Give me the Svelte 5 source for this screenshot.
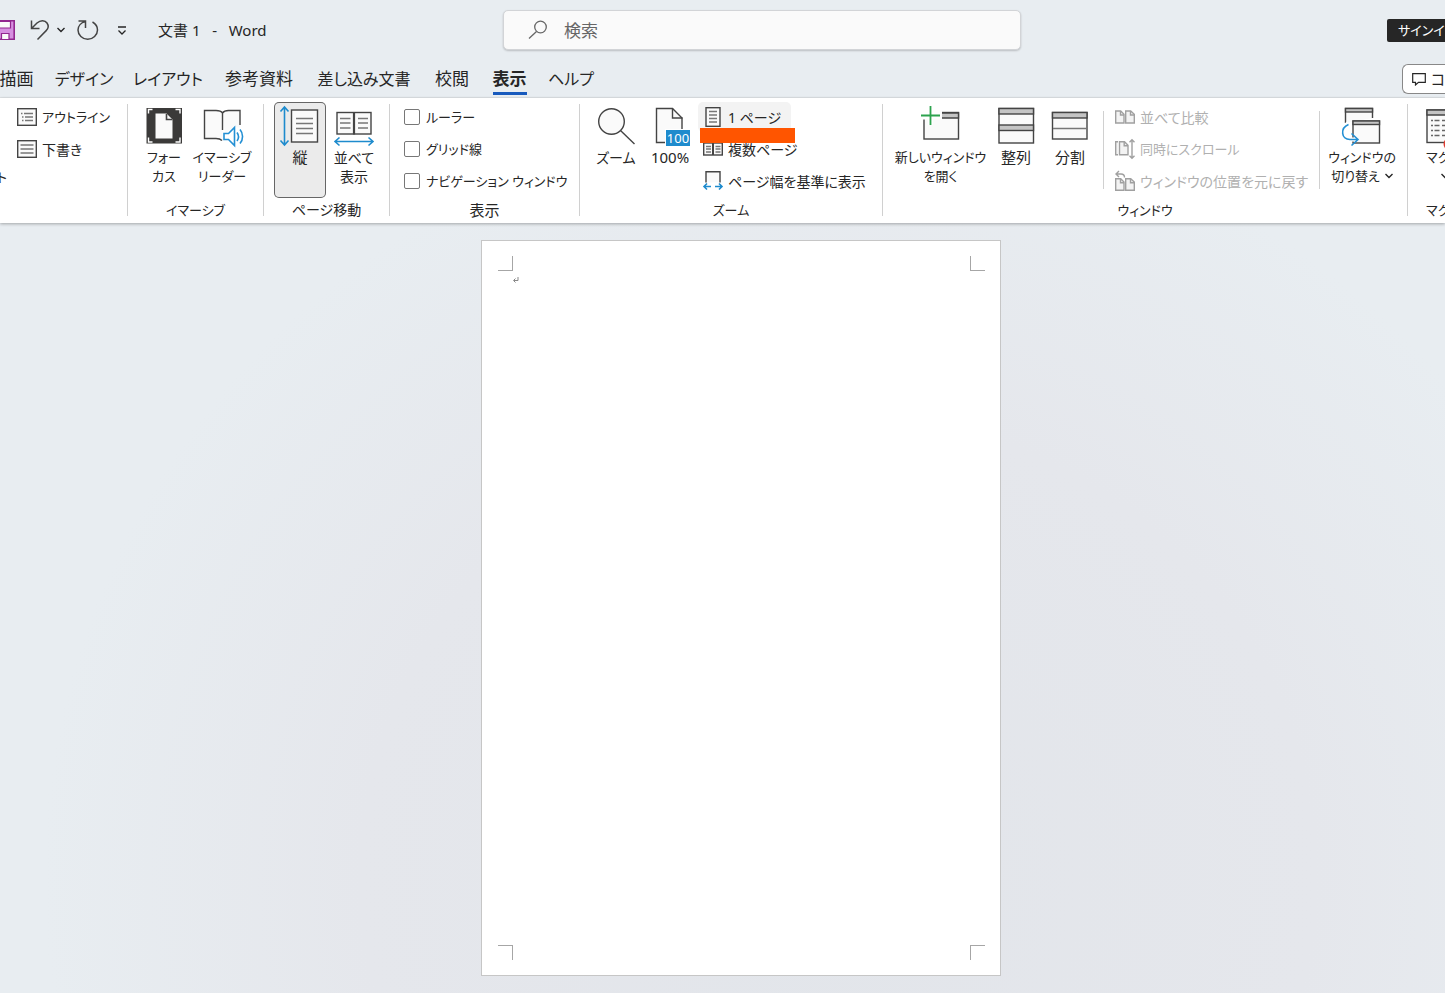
<script>
  const tabs = [
    { label: "描画" },
    { label: "デザイン", kana: true },
    { label: "レイアウト", kana: true },
    { label: "参考資料" },
    { label: "差し込み文書", kana: true },
    { label: "校閲" },
    { label: "表示" },
    { label: "ヘルプ", kana: true },
  ];
  let activeTab = $state("表示");
  let search = $state("");

  let options = $state([
    { label: "ルーラー", checked: false },
    { label: "グリッド線", checked: false },
    { label: "ナビゲーション ウィンドウ", checked: false },
  ]);
</script>

{#snippet chevron()}
  <svg class="chevron" width="8" height="6" viewBox="0 0 8 6">
    <path d="M0.5 1 L4 4.5 L7.5 1" fill="none" stroke="#262626" stroke-width="1.4" />
  </svg>
{/snippet}

{#snippet big(name, lines, arrow = false, pressed = false)}
  <button class="big big--{name}" class:pressed>
    <svg class="big__icon" width="40" height="40" viewBox="0 0 40 40" fill="none" stroke="#444" stroke-width="1.4">
      {#if name === "focus"}
        <rect x="2.500" y="2" width="35.5" height="35.5" fill="#3b3a39" stroke="none" />
        <path d="M4.5 7.5V3.5H8.500M31.500 3.5h4.5V7.5M4.5 31.5v4.5H8.5M31.5 36h4.5V31.5" stroke="#fff" />
        <path d="M11.5 7.5h11l6 6v19h-17z" fill="#fafafa" stroke="none" />
        <path d="M22.5 8v5.5h6" stroke-width="1.6" />
      {:else if name === "reader"}
        <path d="M20.5 6.5C19 4.8 17 4.5 14 4.5H2.5v28H14c3 0 5 .8 6.5 2.5V6.5c1.5-1.7 3.5-2 6-2h11.5v17L32 21l-9 7" fill="#fafafa" stroke="none" />
        <path d="M20 34.5C18.5 33 17 32.5 14 32.5H2.5v-28H14c3 0 5 .3 6.5 2.5V24M20.5 7c1.5-2.2 3.5-2.5 6-2.5H38V19" />
        <path d="M22 27.5h4.5l6-6v18l-6-6H22z" fill="#fff" stroke="#2490d4" stroke-width="1.6" />
        <path d="M35 26.5c1.8 2.5 1.8 6 0 8.5M38 23.5c3.4 4 3.4 10 0 14" stroke="#2490d4" stroke-width="1.6" />
      {:else if name === "vertical"}
        <path d="M4.5 1v38M0.5 5.5l4-4.5 4 4.5M0.5 34.5l4 4.5 4-4.5" stroke="#1e8bcd" stroke-width="1.6" />
        <rect x="11.5" y="4" width="26" height="32" fill="#fafafa" />
        <path d="M16 12.5h17M16 17.5h17M16 22.5h17M16 27.5h17" stroke="#777" />
      {:else if name === "side"}
        <rect x="3" y="6.5" width="34" height="21.5" fill="#fafafa" />
        <path d="M20 6v22.5" stroke-width="2.2" />
        <path d="M6 12.5h10.5M6 17h10.5M6 22h10.5M24 12.5h10M24 17h10M24 22h10" stroke="#777" />
        <path d="M1 35.5h38M5.5 31.5L1 35.5l4.5 4M34.5 31.5l4.5 4-4.5 4" stroke="#1e8bcd" stroke-width="1.6" />
      {:else if name === "zoom"}
        <circle cx="15.5" cy="15.5" r="12.8" fill="#fafafa" />
        <path d="M24.5 24.5L38.5 38" />
      {:else if name === "hundred"}
        <path d="M6.5 2.5h16l9.5 9.5v24.5h-25.5z" fill="#fafafa" />
        <path d="M22.5 2.5v9.5h10" />
        <rect x="15.5" y="23.5" width="25" height="17" fill="#1e8bcd" stroke="#fff" stroke-width="1" />
        <text x="28" y="37" text-anchor="middle" fill="#fff" stroke="none">100</text>
      {:else if name === "new"}
        <rect x="3" y="6.5" width="34.5" height="26.5" fill="#fafafa" />
        <path d="M3 7h34.5v5H3z" fill="#c4c4c4" />
        <path d="M-1 3h22v10.5H2v-1z" fill="#fff" stroke="none" />
        <path d="M9.5 0v19M0 9.5h19" stroke="#fff" stroke-width="5" />
        <path d="M9.5 0v19M0 9.5h19" stroke="#2da34e" stroke-width="1.8" />
      {:else if name === "arrange"}
        <rect x="3" y="2.5" width="34.5" height="34.5" fill="#fafafa" />
        <rect x="3" y="2.5" width="34.5" height="5.5" fill="#c4c4c4" />
        <rect x="3" y="19" width="34.5" height="5.5" fill="#c4c4c4" />
      {:else if name === "split"}
        <rect x="2.5" y="6.5" width="34.5" height="26.5" fill="#fafafa" />
        <rect x="2.5" y="6.5" width="34.5" height="5.5" fill="#c4c4c4" />
        <path d="M3 22.5h34" stroke="#777" />
      {:else if name === "switch"}
        <path d="M3.5 17V2.5h27V12" fill="#fafafa" />
        <rect x="3.5" y="2.5" width="27" height="3.5" fill="#c4c4c4" />
        <rect x="11" y="15" width="26.5" height="22" fill="#fafafa" />
        <rect x="11" y="15" width="26.5" height="3.5" fill="#c4c4c4" />
        <path d="M6.5 17C-2 22-1 33.5 8 33.5h8" stroke="#fff" stroke-width="4" />
        <path d="M6.5 18.5C-2 22-1 33.5 8 33.5h8M9.5 27.5l6.5 6-6.5 6" stroke="#2490d4" stroke-width="1.6" />
      {:else if name === "macro"}
        <rect x="1" y="4" width="36" height="32.5" fill="#fafafa" />
        <path d="M1 4h36v5H1z" fill="#c4c4c4" />
        <path d="M5 14.5h2M5 19.5h2M5 24.5h2M5 29.5h2M8.5 14.5h5M8.5 19.5h5M8.5 24.5h5M8.5 29.5h5M16 14.5h6M16 19.5h6M16 24.5h6M16 29.5h6" stroke="#666" />
        <circle cx="24" cy="38" r="6.5" fill="#e03c31" stroke="none" />
      {/if}
    </svg>
    {#each lines as line, i}
      <span>{line}{#if arrow && i === lines.length - 1}{@render chevron()}{/if}</span>
    {/each}
  </button>
{/snippet}

{#snippet small(name, label, disabled = false)}
  <button class="small small--{name}" {disabled}>
    <svg width="20" height="20" viewBox="0 0 20 20" fill="none" stroke={disabled ? "#a0a0a0" : "#444"} stroke-width="1.4">
      {#if name === "outline"}
        <rect x="0.7" y="1.7" width="18.6" height="16.6" fill="#fafafa" />
        <path d="M4 6.5h1.5M7 6.5h9M5 10h1.5M8 10h8M5 13.5h1.5M8 13.5h8" stroke="#777" />
      {:else if name === "draft"}
        <rect x="0.7" y="1.7" width="18.6" height="16.6" fill="#fafafa" />
        <path d="M3.5 6h13M3.5 10h13M3.5 14h13" stroke="#777" />
      {:else if name === "one"}
        <rect x="3" y="0.7" width="14" height="18.6" fill="#fafafa" />
        <path d="M6 4.5h8M6 8h8M6 11.5h8M6 15h8" stroke="#777" />
      {:else if name === "multi"}
        <rect x="0.7" y="4" width="18.6" height="12" fill="#fafafa" />
        <path d="M10 4v12" stroke-width="2" />
        <path d="M3 7.5h5M3 10h5M3 13h5M12.5 7.5h5M12.5 10h5M12.5 13h5" stroke="#777" />
      {:else if name === "width"}
        <path d="M3 11.5V0.7h14v10.8" fill="#fafafa" />
        <path d="M1 15.5h7M12 15.5h7M4 12.5l-3 3 3 3M16 12.5l3 3-3 3" stroke="#1e8bcd" stroke-width="1.6" />
      {:else if name === "compare"}
        <path d="M0.7 4h5l3.3 3.3V16H0.7zM10.7 4h5l3.6 3.3V16h-8.6z" fill="#f3f3f3" />
        <path d="M5.5 4v4H9M15.5 4v4h4" />
      {:else if name === "sync"}
        <path d="M3 2.7H0.7v13H3M4.5 2.7h5L13 6.2v9.5H4.5z" fill="#f3f3f3" />
        <path d="M9.2 2.7v4H13M17 0.7v18.6M14.5 3.2L17 0.7l2.5 2.5M14.5 16.8l2.5 2.5 2.5-2.5" />
      {:else if name === "reset"}
        <path d="M0.7 7.7h5l3.3 3.3v8.3H0.7zM10.7 7.7h5l3.6 3.3v8.3h-8.6z" fill="#f3f3f3" />
        <path d="M5.5 7.7v4H9M15.5 7.7v4h4M1 3h5c2.5 0 3.5 1 3.5 3.5M4 0L1 3l3 3" />
      {/if}
    </svg>
    {label}
  </button>
{/snippet}

<div class="word">
  <header class="titlebar">
    <div class="quick">
      <button class="quick__save" aria-label="上書き保存">
        <svg width="15" height="20" viewBox="0 0 15 20">
          <path d="M-2 0.8H14.2V19.2H-2z" fill="#d68fe0" stroke="#92278f" stroke-width="1.6" />
          <path d="M-2 1.5H10.5V8H-2zM1.5 13.5h7.5v6H1.5z" fill="#fafafa" stroke="#92278f" stroke-width="1.2" />
        </svg>
      </button>
      <button class="quick__undo" aria-label="元に戻す">
        <svg width="20" height="20" viewBox="0 0 20 20" fill="none" stroke="#444" stroke-width="1.5">
          <path d="M1.5 0.5V8.5H9.5M1.5 8.5L7 3C10.5-0.2 15 0 17 3c1.8 2.6 1.3 5.5-.8 7.6L7.5 19.5" />
        </svg>
      </button>
      <button class="quick__menu" aria-label="元に戻す一覧">{@render chevron()}</button>
      <button class="quick__redo" aria-label="やり直し">
        <svg width="22" height="20" viewBox="0 0 22 20" fill="none" stroke="#444" stroke-width="1.5">
          <path d="M1.5 1H8.5V8M8.5 1.5C4 2.5 1 6 1 10c0 5 4.4 9.3 9.7 9.3S20.5 15 20.5 10c0-3.5-2-6.3-5-8" />
        </svg>
      </button>
      <button class="quick__custom" aria-label="クイック アクセス ツール バーのユーザー設定">
        <svg width="10" height="10" viewBox="0 0 10 10" fill="none" stroke="#262626" stroke-width="1.3">
          <path d="M1 2h8M1.5 5.5L5 9 8.5 5.5" />
        </svg>
      </button>
      <span class="title">文書 1&nbsp;&nbsp; -&nbsp;&nbsp; Word</span>
    </div>
    <label class="search">
      <svg width="20" height="20" viewBox="0 0 20 20" fill="none" stroke="#666" stroke-width="1.3">
        <circle cx="12.5" cy="7" r="5.8" />
        <path d="M8.5 11.5L1 18.5" />
      </svg>
      <input type="text" placeholder="検索" aria-label="検索" bind:value={search} />
    </label>
    <div class="account">
      <button class="signin">サインイン</button>
    </div>
  </header>

  <div class="tabbar">
    <nav class="tabs">
      {#each tabs as tab}
        <button
          class="tab"
          class:kana={tab.kana}
          class:active={tab.label === activeTab}
          onclick={() => (activeTab = tab.label)}
        >
          <span>{tab.label}</span>
        </button>
      {/each}
    </nav>
    <button class="comment">
      <svg width="14" height="13" viewBox="0 0 14 13" fill="none" stroke="#262626" stroke-width="1.2">
        <path d="M0.7 0.7h12.6v8.6H6.5L3.5 12V9.3H0.7z" />
      </svg>
      コメント
    </button>
  </div>

  <section class="ribbon">
    <div class="group group--views">
      <div class="group__body">
        <button class="cut">ト</button>
        <div class="stack">
          {@render small("outline", "アウトライン")}
          {@render small("draft", "下書き")}
        </div>
      </div>
    </div>
    <div class="separator"></div>
    <div class="group group--immersive">
      <div class="group__body">
        {@render big("focus", ["フォー", "カス"])}
        {@render big("reader", ["イマーシブ", "リーダー"])}
      </div>
      <div class="group__label">イマーシブ</div>
    </div>
    <div class="separator"></div>
    <div class="group group--move">
      <div class="group__body">
        {@render big("vertical", ["縦"], false, true)}
        {@render big("side", ["並べて", "表示"])}
      </div>
      <div class="group__label">ページ移動</div>
    </div>
    <div class="separator"></div>
    <div class="group group--show">
      <div class="group__body">
        <div class="stack">
          {#each options as option}
            <label class="option">
              <input type="checkbox" bind:checked={option.checked} />
              {option.label}
            </label>
          {/each}
        </div>
      </div>
      <div class="group__label">表示</div>
    </div>
    <div class="separator"></div>
    <div class="group group--zoom">
      <div class="group__body">
        {@render big("zoom", ["ズーム"])}
        {@render big("hundred", ["100%"])}
        <div class="stack">
          {@render small("one", "1 ページ")}
          {@render small("multi", "複数ページ")}
          {@render small("width", "ページ幅を基準に表示")}
          <div class="marker"></div>
        </div>
      </div>
      <div class="group__label">ズーム</div>
    </div>
    <div class="separator"></div>
    <div class="group group--window">
      <div class="group__body">
        {@render big("new", ["新しいウィンドウ", "を開く"])}
        {@render big("arrange", ["整列"])}
        {@render big("split", ["分割"])}
        <div class="separator separator--inner"></div>
        <div class="stack">
          {@render small("compare", "並べて比較", true)}
          {@render small("sync", "同時にスクロール", true)}
          {@render small("reset", "ウィンドウの位置を元に戻す", true)}
        </div>
        <div class="separator separator--inner"></div>
        {@render big("switch", ["ウィンドウの", "切り替え"], true)}
      </div>
      <div class="group__label">ウィンドウ</div>
    </div>
    <div class="separator"></div>
    <div class="group group--macro">
      <div class="group__body">
        {@render big("macro", ["マクロ", ""], true)}
      </div>
      <div class="group__label">マクロ</div>
    </div>
  </section>

  <main class="workspace">
    <article class="page">
      <div class="page__marks page__marks--top"><i></i><i></i></div>
      <svg class="page__return" width="6" height="6" viewBox="0 0 6 6" fill="none" stroke="#888">
        <path d="M5 0v3.5H1M2.500 1.5L0.5 3.5l2 2" />
      </svg>
      <div class="page__marks page__marks--bottom"><i></i><i></i></div>
    </article>
  </main>
</div>

<style>
  :global(body) {
    margin: 0;
  }

  .word {
    display: flex;
    flex-direction: column;
    min-height: 100vh;
    overflow: hidden;
    font-family: "Noto Sans", "Noto Sans CJK JP", sans-serif;
    font-feature-settings: "palt";
    font-size: 15px;
    line-height: 19px;
    color: #262626;
    background: #e8edf1;
  }

  button,
  input {
    font: inherit;
    font-feature-settings: inherit;
    color: inherit;
  }

  button {
    display: flex;
    align-items: center;
    padding: 0;
    border: 0;
    background: transparent;
    white-space: nowrap;
  }

  svg {
    flex: none;
    overflow: visible;
  }

  .titlebar {
    display: grid;
    grid-template-columns: 503fr 518fr 424fr;
    align-items: center;
    height: 60px;
  }

  .quick {
    display: flex;
    align-items: center;
  }

  .quick__save {
    margin-right: 15px;
  }

  .quick__undo {
    margin-right: 7px;
  }

  .quick__menu {
    margin-right: 12px;
  }

  .quick__redo {
    margin-right: 18px;
  }

  .quick__custom {
    margin-right: 31px;
  }

  .search {
    display: flex;
    align-items: center;
    gap: 16px;
    height: 38px;
    padding: 0 24px;
    border: 1px solid #d2d4d7;
    border-radius: 5px;
    background: #fafafa;
    box-shadow: 0 1px 2px rgba(0, 0, 0, 0.2);
  }

  .search input {
    flex: 1;
    min-width: 0;
    padding: 0;
    border: 0;
    outline: 0;
    background: transparent;
    font-size: 17px;
  }

  .search input::placeholder {
    color: #666;
    opacity: 1;
  }

  .account {
    display: flex;
    justify-content: flex-end;
  }

  .signin {
    width: 58px;
    height: 23px;
    padding-left: 11px;
    border-radius: 2px 0 0 2px;
    overflow: hidden;
    color: #fff;
    background: #262626;
    font-size: 13px;
  }

  .tabbar {
    display: flex;
    align-items: flex-start;
    justify-content: space-between;
    height: 37px;
    border-bottom: 1px solid #dfe3e6;
  }

  .tabs {
    display: grid;
    grid-template-columns: 57px 78px 90px 92px 118px 58px 57px 66px;
    margin-left: -12px;
  }

  .tab {
    justify-content: center;
    height: 36px;
    font-size: 17px;
  }

  .tab.kana {
    font-size: 16px;
  }

  .tab span {
    padding-top: 5px;
    border-bottom: 3px solid transparent;
    line-height: 26px;
  }

  .tab.active span {
    border-color: #185abd;
    font-weight: bold;
  }

  .comment {
    gap: 5px;
    box-sizing: border-box;
    width: 43px;
    height: 30px;
    margin-top: 4px;
    padding-left: 9px;
    border: 1px solid #888;
    border-right: 0;
    border-radius: 6px 0 0 6px;
    overflow: hidden;
    background: #fff;
  }

  .ribbon {
    position: relative;
    z-index: 1;
    display: flex;
    height: 121px;
    padding-top: 4px;
    overflow: hidden;
    background: #fff;
    box-shadow: 0 1px 3px rgba(0, 0, 0, 0.3);
  }

  .separator {
    flex: none;
    width: 1px;
    margin: 2px 0 7px;
    background: #d0d0d0;
  }

  .separator--inner {
    margin: 9px 6px;
  }

  .group {
    display: flex;
    flex: none;
    flex-direction: column;
  }

  .group__body {
    display: flex;
    height: 96px;
  }

  .group__label {
    text-align: center;
    line-height: 24px;
    white-space: nowrap;
    font-size: 13px;
  }

  .group--move .group__label {
    font-size: 14px;
  }

  .group--show .group__label {
    font-size: 15px;
  }

  .group--views {
    width: 127px;
  }

  .group--immersive {
    width: 135px;
  }

  .group--move {
    width: 125px;
  }

  .group--show {
    width: 189px;
  }

  .group--zoom {
    width: 302px;
  }

  .group--window {
    width: 524px;
  }

  .group--macro {
    flex: 1;
    min-width: 0;
  }

  .group--immersive .group__body,
  .group--move .group__body,
  .group--zoom .group__body {
    padding-left: 10px;
  }

  .group--window .group__body {
    padding-left: 9px;
  }

  .group--show .group__body {
    padding-left: 14px;
  }

  .group--macro .group__body,
  .group--macro .group__label {
    padding-left: 18px;
    text-align: left;
  }

  .cut {
    justify-content: flex-end;
    width: 7px;
    height: 19px;
    margin: 66px 5px 0 0;
    font-size: 13px;
  }

  .big {
    flex: none;
    flex-direction: column;
    box-sizing: border-box;
    width: 54px;
    padding-top: 4px;
    border-radius: 5px;
    font-size: 15px;
  }

  .big--focus,
  .big--vertical,
  .big--zoom {
    width: 52px;
  }

  .big--side,
  .big--hundred {
    width: 56px;
  }

  .big--reader {
    width: 64px;
  }

  .big--new {
    width: 97px;
  }

  .big--switch {
    width: 72px;
  }

  .big--side,
  .big--zoom {
    font-size: 14px;
  }

  .big--focus,
  .big--reader,
  .big--new,
  .big--switch,
  .big--macro {
    font-size: 13px;
  }

  .big--macro {
    align-items: flex-start;
  }

  .big__icon {
    margin-bottom: 2px;
  }

  .big__icon text {
    font-size: 13px;
  }

  .big .chevron {
    margin-left: 5px;
    vertical-align: 2px;
  }

  .big--macro .chevron {
    margin-left: 15px;
  }

  .big.pressed {
    background: #ebebeb;
    box-shadow: inset 0 0 0 1px #666;
  }

  .stack {
    position: relative;
    display: flex;
    flex-direction: column;
    align-items: flex-start;
    gap: 2px;
  }

  .group--window .stack {
    width: 203px;
  }

  .small {
    gap: 5px;
    height: 30px;
    padding: 0 10px 0 5px;
    border-radius: 5px;
    font-size: 14px;
  }

  .small--outline,
  .small--sync {
    font-size: 13px;
  }

  .small--one {
    background: #f3f3f3;
  }

  .small:disabled {
    color: #b0b0b0;
  }

  .option {
    display: flex;
    align-items: center;
    gap: 6px;
    height: 30px;
    font-size: 13px;
    white-space: nowrap;
  }

  .option input {
    appearance: none;
    width: 16px;
    height: 16px;
    margin: 0;
    border: 1px solid #777;
    border-radius: 2px;
    background: #fff;
  }

  .option input:checked {
    background: #185abd;
  }

  .marker {
    position: absolute;
    top: 26px;
    left: 2px;
    width: 95px;
    height: 15px;
    background: #ff5500;
  }

  .workspace {
    display: flex;
    flex: 1;
    justify-content: center;
    padding: 17px 0 17px 37px;
    background: radial-gradient(ellipse 55% 100% at 58% 85%, #e2e5ea, #e5e7ec 60%, #e8edf1);
  }

  .page {
    display: flex;
    flex-direction: column;
    box-sizing: border-box;
    width: 520px;
    padding: 15px 15px 15px 16px;
    border: 1px solid #c6c6c6;
    background: #fff;
  }

  .page__marks {
    display: flex;
    justify-content: space-between;
  }

  .page__marks i {
    box-sizing: border-box;
    width: 15px;
    height: 15px;
    border: 0 solid #a6a6a6;
  }

  .page__marks--top i {
    border-bottom-width: 1px;
  }

  .page__marks--bottom i {
    border-top-width: 1px;
  }

  .page__marks i:first-child {
    border-right-width: 1px;
  }

  .page__marks i:last-child {
    border-left-width: 1px;
  }

  .page__marks--bottom {
    margin-top: auto;
  }

  .page__return {
    margin: 6px 0 0 15px;
  }
</style>
